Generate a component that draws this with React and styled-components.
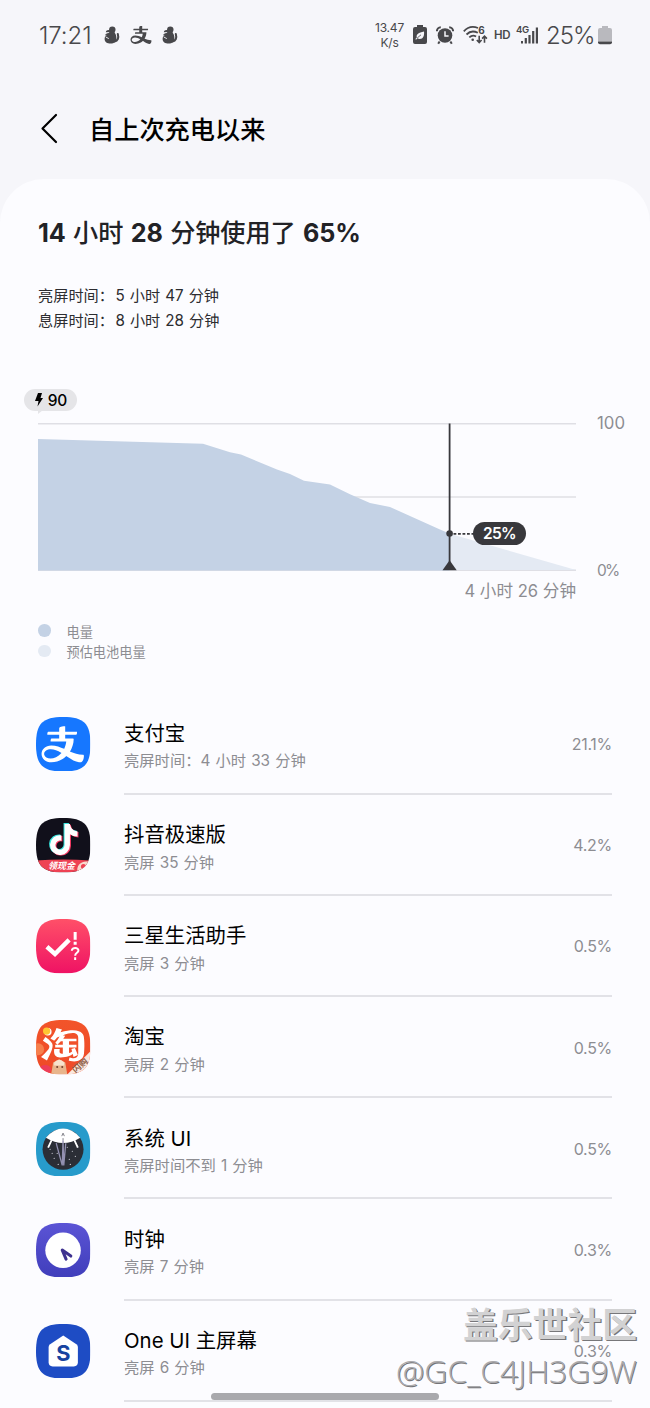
import React from 'react';
import styled, { createGlobalStyle } from 'styled-components';
import { AiOutlineAlipay, AiOutlineTaobao } from 'react-icons/ai';
import { FaTiktok } from 'react-icons/fa6';

const GlobalStyle = createGlobalStyle`
  * {
    box-sizing: border-box;
  }

  body {
    margin: 0;
    background: #f6f6fa;
    font-family: Inter, 'Noto Sans CJK SC', sans-serif;
    overflow: hidden;
  }

  svg {
    display: block;
    flex: none;
  }
`;

const Screen = styled.div`
  position: relative;
  width: 650px;
  height: 1408px;
  overflow: hidden;
  display: flex;
  flex-direction: column;
`;

const StatusBar = styled.div`
  height: 70px;
  padding: 0 38px 0 39px;
  display: flex;
  align-items: center;
  justify-content: space-between;
  color: #48484b;
`;

const StatusGroup = styled.div`
  display: flex;
  align-items: center;
  gap: ${(props) => props.$gap}px;
`;

const Clock = styled.span`
  width: 56px;
  font-size: 24px;
  font-weight: 300;
  letter-spacing: -0.1px;
  white-space: nowrap;
`;

const Speed = styled.span`
  width: 31px;
  margin-right: -1px;
  font-size: 12px;
  line-height: 15px;
  text-align: center;
  letter-spacing: -0.2px;
`;

const Hd = styled.span`
  width: 16px;
  margin: 0 -3px;
  font-size: 11.5px;
  font-weight: 600;
  letter-spacing: -0.4px;
`;

const Percent = styled.span`
  width: 48px;
  margin: 0 -5px 0 -2px;
  font-size: 24px;
  font-weight: 300;
  letter-spacing: -1px;
  white-space: nowrap;
`;

const Header = styled.header`
  height: 109px;
  padding: 5px 0 0 38px;
  display: flex;
  align-items: flex-start;
  gap: 29px;
`;

const BackButton = styled.button`
  margin-top: 37px;
  padding: 0;
  border: 0;
  background: none;
`;

const Title = styled.h1`
  margin: 37px 0 0;
  font-size: 25.2px;
  line-height: 36px;
  font-weight: 500;
  color: #000;
`;

const Card = styled.main`
  height: 1229px;
  flex: none;
  border-radius: 44px 44px 0 0;
  background: #fcfcff;
`;

const Summary = styled.h2`
  margin: 0;
  padding: 36px 0 0 38px;
  font-size: 25.2px;
  line-height: 36px;
  font-weight: 500;
  letter-spacing: -0.1px;
  word-spacing: 0.8px;
  color: #222226;

  b {
    font-weight: 700;
  }
`;

const Times = styled.div`
  padding: 32px 0 0 38px;
  font-size: 15.2px;
  line-height: 25px;
  word-spacing: 0.8px;
  color: #2c2c30;

  span {
    margin-left: 1.5px;
  }
`;

const ChartArea = styled.section`
  height: 180px;
  margin-top: 90px;
  padding-left: 38px;
  display: flex;
  gap: 21px;
`;

const Plot = styled.div`
  position: relative;
  width: 538px;
`;

const Scale = styled.div`
  height: 168px;
  margin-top: -10.5px;
  display: flex;
  flex-direction: column;
  justify-content: space-between;
  font-size: 16.8px;
  line-height: 21px;
  color: #8d8d92;

  span:last-child {
    font-size: 15.5px;
    letter-spacing: -1.8px;
  }
`;

const Remaining = styled.div`
  margin-top: 6px;
  text-align: right;
  font-size: 16.6px;
  line-height: 24px;
  color: #8d8d92;
`;

const ChargeBadge = styled.div`
  position: absolute;
  left: -14px;
  top: -34px;
  width: 53px;
  height: 22px;
  padding: 0 10px 0 11px;
  border-radius: 11px;
  display: flex;
  align-items: center;
  justify-content: space-between;
  background: #e5e5e8;
  font-size: 15.5px;
  font-weight: 500;
  letter-spacing: -0.3px;
  color: #000;

  &::after {
    content: '';
    position: absolute;
    left: 14px;
    top: 21px;
    border-top: 4px solid #e5e5e8;
    border-right: 5px solid transparent;
  }
`;

const LevelBadge = styled.div`
  position: absolute;
  left: 435px;
  top: 99px;
  width: 53px;
  height: 23px;
  border-radius: 12px;
  background: #38383c;
  color: #fff;
  font-size: 15.5px;
  line-height: 23px;
  font-weight: 600;
  letter-spacing: -0.6px;
  text-align: center;
`;

const Legend = styled.div`
  height: 90.5px;
  padding: 18px 0 0 38px;
`;

const LegendItem = styled.div`
  display: flex;
  align-items: center;
  gap: 16px;
  height: 20.5px;
  font-size: 13.2px;
  color: #8d8d92;

  &::before {
    content: '';
    width: 12.5px;
    height: 12.5px;
    margin-top: -2px;
    border-radius: 50%;
    background: ${(props) => props.$color};
  }
`;

const List = styled.ul`
  margin: 0;
  padding: 0 38px 0 36px;
  list-style: none;
`;

const Row = styled.li`
  height: 101.2px;
  display: flex;
  align-items: center;
  gap: 33.5px;
`;

const RowBody = styled.div`
  flex: 1;
  height: 100%;
  display: flex;
  align-items: center;
  justify-content: space-between;
  border-bottom: 2px solid #e2e2e7;
`;

const AppText = styled.div`
  padding-top: 6px;
`;

const AppName = styled.div`
  font-size: 20.4px;
  line-height: 29.5px;
  color: #000;
`;

const AppUsage = styled.div`
  font-size: 15.3px;
  line-height: 25px;
  word-spacing: 0.8px;
  color: #8d8d92;
`;

const AppPercent = styled.span`
  padding-top: 2px;
  font-size: 16px;
  letter-spacing: -0.3px;
  color: #8d8d92;
`;

const NavHandle = styled.div`
  position: absolute;
  left: 211px;
  bottom: 8px;
  width: 228px;
  height: 7px;
  border-radius: 4px;
  background: #a9a9ad;
`;

const Watermark = styled.div`
  position: absolute;
  right: 13px;
  top: 1302px;
  text-align: right;
  white-space: nowrap;
  color: #d2d2d3;
  text-shadow: 1.3px 1.3px 0 #77777a;
`;

const Community = styled.div`
  font-size: 34.8px;
  line-height: 47px;
  font-weight: 700;
`;

const UserTag = styled.div`
  font-family: 'Open Sans', 'Noto Sans', sans-serif;
  font-size: 31.9px;
  line-height: 44px;
  font-weight: 300;
  color: #a9a9ac;
  text-shadow: 0.8px 0.8px 0 #747477;
`;

const SealIcon = () => (
  <svg width="16" height="18" viewBox="0 0 16 18" fill="currentColor">
    <circle cx="8.300" cy="3.600" r="3.200" />
    <path d="M8 3.500L3.200 4.200Q1.800 4.800 1.800 6.200L8 6z" />
    <path d="M5.800 5.500h4.700c-.2 1.500 1.900 2.600 1.900 6.500 0 3.800-2.200 5.600-5.700 5.600S.6 16 .6 13c0-1.900 1-3.300 2.400-4.200L.9 9.500C1.500 7.900 2.700 7 4.700 7z" />
    <path d="M10.500 15.500c3.200-.8 4.500-3.400 3.300-7.500" fill="none" stroke="currentColor" strokeWidth="2.100" strokeLinecap="round" />
    <path d="M1.800 11l3 1.600" stroke="#f6f6fa" strokeWidth=".9" />
  </svg>
);

const EcoBattery = () => (
  <svg width="14" height="20" viewBox="0 0 14 20">
    <path d="M4 0h6v2h2a2 2 0 0 1 2 2v13a2 2 0 0 1-2 2H2a2 2 0 0 1-2-2V4a2 2 0 0 1 2-2h2z" fill="currentColor" />
    <path d="M11 6.500c.5 4-.8 7.500-4.200 7.500-1 0-1.700-.2-2.300-.7L3 14.800l-.6-.7 1.400-1.700C3 9.200 5.500 7.800 11 6.500z" fill="#f6f6fa" />
    <path d="M4.200 13l3.800-3.200" stroke="currentColor" strokeWidth=".8" />
  </svg>
);

const AlarmIcon = () => (
  <svg width="18" height="19" viewBox="0 0 18 19" fill="none" stroke="currentColor">
    <circle cx="9" cy="9.500" r="7.300" fill="currentColor" stroke="none" />
    <path d="M.9 5.200A4 4 0 0 1 4.800 1.200M17.100 5.200a4 4 0 0 0-3.900-4M3.600 15.500l-1.400 2.300M14.400 15.500l1.400 2.300" strokeWidth="2" />
    <path d="M9 5.200v4.800h3.600" stroke="#f6f6fa" strokeWidth="1.500" />
  </svg>
);

const WifiIcon = () => (
  <svg width="25" height="20" viewBox="0 0 25 20" fill="none" stroke="currentColor" strokeWidth="1.800">
    <path d="M.8 6.400C4.500 2.200 10 1 15 3M3.500 9.500C6.500 6.400 11 5.800 14.800 7.800M6.300 12.400c2-1.900 4.600-2.200 6.800-.9" />
    <circle cx="9.700" cy="14.700" r="1.300" fill="currentColor" stroke="none" />
    <path d="M16.200 10.800v6.500M13.800 15l2.400 2.500 2.400-2.500M21.500 17.700v-6.300M19.100 13.600l2.400-2.500 2.400 2.500" strokeWidth="1.600" />
    <text x="15.200" y="8.600" fontSize="10" fontWeight="700" fill="currentColor" stroke="none">6</text>
  </svg>
);

const SignalIcon = () => (
  <svg width="23" height="20" viewBox="0 0 23 20" fill="currentColor">
    <text x="0" y="8.300" fontSize="9.600" fontWeight="600" letterSpacing="-.4">4G</text>
    <rect x="5" y="16" width="2" height="2.500" />
    <rect x="8.700" y="13" width="2.200" height="5.500" />
    <rect x="12.400" y="10" width="2.200" height="8.500" />
    <rect x="16.100" y="6" width="2.200" height="12.500" />
    <rect x="19.800" y="2.500" width="2.200" height="16" />
  </svg>
);

const BatteryIcon = () => (
  <svg width="14" height="19" viewBox="0 0 14 19">
    <path d="M4 0h6v2h2a2 2 0 0 1 2 2v11.500H0V4a2 2 0 0 1 2-2h2z" fill="#b9b9be" />
    <path d="M0 15.500h14v.8a2 2 0 0 1-2 2H2a2 2 0 0 1-2-2z" fill="#48484b" />
  </svg>
);

const Tile = ({ id, from, to, children }) => (
  <svg width="54.500" height="54.500" viewBox="0 0 54 54">
    <defs>
      <linearGradient id={`${id}-fill`} x1="0" y1="0" x2="0" y2="1">
        <stop offset="0" stopColor={from} />
        <stop offset="1" stopColor={to || from} />
      </linearGradient>
      <clipPath id={`${id}-clip`}>
        <path d="M27 0C47.500 0 54 6.500 54 27S47.500 54 27 54 0 47.500 0 27 6.500 0 27 0z" />
      </clipPath>
    </defs>
    <g clipPath={`url(#${id}-clip)`}>
      <rect width="54" height="54" fill={`url(#${id}-fill)`} />
      {children}
    </g>
  </svg>
);

const AlipayTile = () => (
  <Tile id="alipay" from="#1677ff">
    <AiOutlineAlipay x="2.500" y="3" size="48" color="#fff" />
  </Tile>
);

const DouyinTile = () => (
  <Tile id="douyin" from="#11101b">
    <FaTiktok x="11" y="5" size="31" color="#36e5df" />
    <FaTiktok x="13" y="6.500" size="31" color="#fb3b65" />
    <FaTiktok x="12" y="5.700" size="31" color="#fff" />
    <path d="M0 42Q27 40 54 42V54H0z" fill="#ee4254" />
    <path d="M41 54c-1-6 2-11 9-11h4v11z" fill="#f8d9cd" />
    <circle cx="47" cy="48" r="2.500" fill="#ee4254" />
    <text x="12" y="50.800" fontSize="8.900" fontWeight="700" fontStyle="italic" fill="#fff">领现金</text>
  </Tile>
);

const AssistantTile = () => (
  <Tile id="assistant" from="#ff5068" to="#ef1264">
    <path d="M10.800 27.500l8 7.200 14-14" fill="none" stroke="#fff" strokeWidth="4.400" />
    <path d="M38.800 13v7.500M38.800 22.500v3" stroke="#fff" strokeWidth="3" />
    <path d="M35.500 31.500c0-4 7-3.500 6.500 0-.3 2-3.200 2-3.200 4.800M38.800 38v2.500" fill="none" stroke="#fff" strokeWidth="2" />
  </Tile>
);

const TaobaoTile = () => (
  <Tile id="taobao" from="#f2542a" to="#ee4a28">
    <circle cx="2" cy="29" r="6" fill="#f6804d" />
    <AiOutlineTaobao x="-1" y="-3" size="55" color="#fff" />
    <circle cx="10.500" cy="11" r="3.600" fill="#ffc531" />
    <ellipse cx="9" cy="49" rx="6" ry="4.500" fill="#ed3d5a" />
    <path d="M15 54l2-12 6-3 6 3 2 12z" fill="#e8b58c" />
    <path d="M18 42q5-5 10 0v3H18z" fill="#f7e3cd" />
    <circle cx="21" cy="46.500" r="1" fill="#70412f" />
    <circle cx="26" cy="46.500" r="1" fill="#70412f" />
    <path d="M31 54l23-23v23z" fill="#f9e8df" />
    <text x="0" y="0" transform="translate(39.500 53) rotate(-43)" fontSize="8.500" fontWeight="700" fill="#8d5b45">闪购</text>
  </Tile>
);

const stars = [[14, 27], [18, 36], [21, 31], [33, 37], [36, 29], [31, 25], [16, 31], [39, 34], [34, 42], [22, 42], [41, 25]];

const SystemTile = () => (
  <Tile id="system" from="#279bcb">
    <circle cx="26.800" cy="27" r="20.300" fill="#2b2e36" />
    <path d="M9.800 15.500Q18 6.500 26.800 6.500T43.800 15.500Q27 26 9.800 15.500z" fill="#fff" />
    <path d="M15.500 18l-3.500 7.500M38 18l3.500 7.500" stroke="#fff" strokeWidth="1.800" />
    {stars.map(([x, y]) => (
      <circle key={`${x}-${y}`} cx={x} cy={y} r=".6" fill="#d4d5dd" />
    ))}
    <path d="M20 21l6 22 .8-25 .7 25 2-22" fill="none" stroke="#9390b0" strokeWidth="1.300" />
    <path d="M25.500 14l1.300-3 1.300 3M26.800 16v2" fill="none" stroke="#77777f" strokeWidth=".9" />
  </Tile>
);

const ClockTile = () => (
  <Tile id="clock" from="#5b54d5" to="#403ebb">
    <circle cx="26.800" cy="27" r="17.600" fill="#fff" />
    <path d="M34.500 32.800l-8.500-6 3.800 9" fill="none" stroke="#3e318f" strokeWidth="3" strokeLinecap="round" strokeLinejoin="round" />
  </Tile>
);

const HomeTile = () => (
  <Tile id="home" from="#1e4cc4">
    <path d="M27 11.500l13 8.500q1.500 1 1.500 2.800V38q0 4-4 4h-21q-4 0-4-4V22.800q0-1.800 1.500-2.800z" fill="#fff" />
    <text x="27" y="36.200" fontSize="21.500" fontWeight="700" textAnchor="middle" fill="#17439f">S</text>
  </Tile>
);

// [x, y] inside the 538 x 150 plot
const history = [
  [0, 16], [165, 20.7], [192, 29.3], [203, 31.5], [239, 46.5], [252, 51], [266, 57.8],
  [292, 61.5], [312, 71.3], [332, 80], [352, 84], [402, 106.5], [411.5, 110.5],
];

const BatteryChart = () => {
  const line = history.map((point) => point.join(' ')).join('L');

  return (
    <svg width="538" height="150" viewBox="0 0 538 150">
      <path d="M0 .8H538M0 74H538M0 147.200H538" stroke="#dfdfe5" strokeWidth="1.600" />
      <path d="M411 110.500L538 147H411z" fill="#e4eaf3" />
      <path d={`M${line}V147.500H0z`} fill="#c4d2e5" />
      <path d="M411.600 .5V147" stroke="#38383c" strokeWidth="1.800" />
      <path d="M404.500 147.300l7.100-10 7.100 10z" fill="#38383c" />
      <circle cx="411.600" cy="110.500" r="3.300" fill="#38383c" />
      <path d="M415.500 110.800H436" stroke="#38383c" strokeWidth="1.700" strokeDasharray="2.800 1.700" />
    </svg>
  );
};

const apps = [
  { name: '支付宝', usage: '亮屏时间：4 小时 33 分钟', percent: '21.1%', icon: AlipayTile },
  { name: '抖音极速版', usage: '亮屏 35 分钟', percent: '4.2%', icon: DouyinTile },
  { name: '三星生活助手', usage: '亮屏 3 分钟', percent: '0.5%', icon: AssistantTile },
  { name: '淘宝', usage: '亮屏 2 分钟', percent: '0.5%', icon: TaobaoTile },
  { name: '系统 UI', usage: '亮屏时间不到 1 分钟', percent: '0.5%', icon: SystemTile },
  { name: '时钟', usage: '亮屏 7 分钟', percent: '0.3%', icon: ClockTile },
  { name: 'One UI 主屏幕', usage: '亮屏 6 分钟', percent: '0.3%', icon: HomeTile },
];

const App = () => (
  <Screen>
    <GlobalStyle />
    <StatusBar>
      <StatusGroup $gap={9}>
        <Clock>17:21</Clock>
        <SealIcon />
        <AiOutlineAlipay size={24} />
        <SealIcon />
      </StatusGroup>
      <StatusGroup $gap={9}>
        <Speed>13.47 K/s</Speed>
        <EcoBattery />
        <AlarmIcon />
        <WifiIcon />
        <Hd>HD</Hd>
        <SignalIcon />
        <Percent>25%</Percent>
        <BatteryIcon />
      </StatusGroup>
    </StatusBar>
    <Header>
      <BackButton aria-label="返回">
        <svg width="22" height="34" viewBox="0 0 22 34" fill="none" stroke="#000" strokeWidth="2.200" strokeLinecap="round" strokeLinejoin="round">
          <path d="M18 3L4.500 16.500 18 30" />
        </svg>
      </BackButton>
      <Title>自上次充电以来</Title>
    </Header>
    <Card>
      <Summary>
        <b>14</b> 小时 <b>28</b> 分钟使用了 <b>65%</b>
      </Summary>
      <Times>
        <div>亮屏时间：<span>5 小时 47 分钟</span></div>
        <div>息屏时间：<span>8 小时 28 分钟</span></div>
      </Times>
      <ChartArea>
        <Plot>
          <BatteryChart />
          <ChargeBadge>
            <svg width="8" height="14" viewBox="0 0 8 14">
              <path d="M3 0h4L5.500 5H8L2.500 13.500 3.500 8H0z" />
            </svg>
            90
          </ChargeBadge>
          <LevelBadge>25%</LevelBadge>
          <Remaining>4 小时 26 分钟</Remaining>
        </Plot>
        <Scale>
          <span>100</span>
          <span>0%</span>
        </Scale>
      </ChartArea>
      <Legend>
        <LegendItem $color="#c4d2e5">电量</LegendItem>
        <LegendItem $color="#e4eaf3">预估电池电量</LegendItem>
      </Legend>
      <List>
        {apps.map(({ name, usage, percent, icon: Icon }) => (
          <Row key={name}>
            <Icon />
            <RowBody>
              <AppText>
                <AppName>{name}</AppName>
                <AppUsage>{usage}</AppUsage>
              </AppText>
              <AppPercent>{percent}</AppPercent>
            </RowBody>
          </Row>
        ))}
      </List>
    </Card>
    <NavHandle />
    <Watermark>
      <Community>盖乐世社区</Community>
      <UserTag>@GC_C4JH3G9W</UserTag>
    </Watermark>
  </Screen>
);

export default App;
